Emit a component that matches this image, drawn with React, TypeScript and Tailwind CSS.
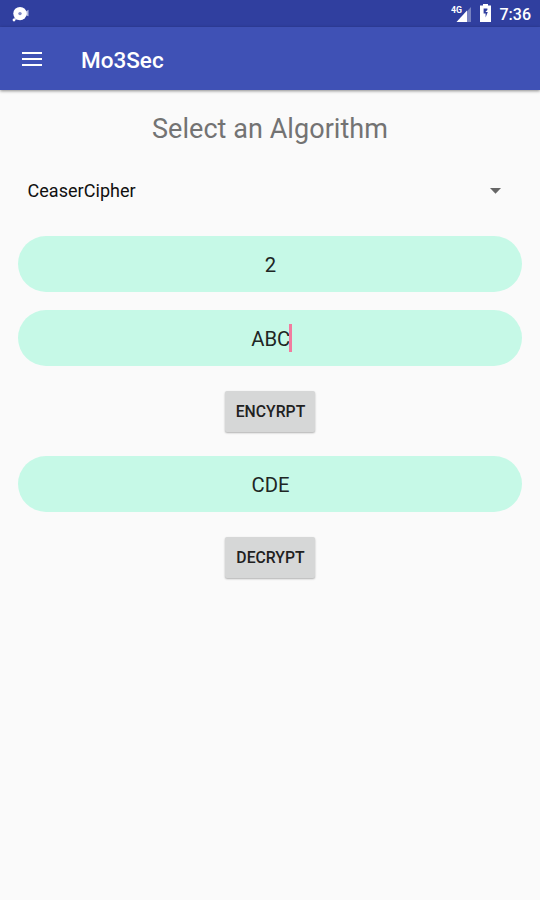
import type { ReactNode } from 'react';

function StatusBar() {
  return (
    <div className="flex h-[27px] items-center bg-[#303f9f] text-white">
      {/* Notification */}
      <svg className="ml-3 h-[18px] w-[18px]" viewBox="0 0 18 18" fill="none">
        <path d="M13 7l3.5-2.3v6.6L13 10z" fill="#b4bae0" />
        <path d="M1.8 15.5 3 10l3.5 4z" fill="#b4bae0" />
        <circle cx="2" cy="15" r="1.4" fill="#fff" />
        <circle cx="8" cy="8.6" r="6.7" fill="#fff" />
        <circle cx="8" cy="8.6" r="1.7" fill="#7f89c6" />
      </svg>

      <svg className="mr-px ml-auto h-[20px] w-[22px]" viewBox="0 0 22 20">
        <path d="M20 3v15H6z" fill="#fff" fillOpacity=".35" />
        <path d="M16 6.5V18H5.5z" fill="#fff" />
        <text x="0" y="9" fill="#fff" fontSize="8.5" fontWeight="700" fontFamily="Roboto, sans-serif" textLength="11" lengthAdjust="spacingAndGlyphs">4G</text>
      </svg>
      <svg className="mr-px mb-0.5 ml-[6px] h-[18px] w-[11px]" viewBox="0 0 11 18">
        <path d="M3 0h5v1.5h3V18H0V1.5h3z" fill="#fff" />
        <path d="M7.4 4.6H3.6v4.8h2v4.2L7.8 8H5.4l2-2z" fill="#303f9f" />
      </svg>
      <span className="mr-[9px] ml-2 pt-0.5 text-[16px] leading-none font-medium">7:36</span>
    </div>
  );
}

function AppBar({ title }: { title: string }) {
  return (
    <header className="relative flex h-[63px] items-center bg-[#3f51b5] pt-1 pl-[22px] text-white shadow-[0_1px_3px_rgba(0,0,0,0.45)]">
      <button type="button" aria-label="Menu" className="mb-1">
        <svg className="h-[14px] w-[20px]" viewBox="0 0 20 14" fill="#fff">
          <path d="M0 0h20v2H0zM0 6h20v2H0zM0 12h20v2H0z" />
        </svg>
      </button>
      <h1 className="ml-[39px] text-[22.5px] leading-none font-medium">{title}</h1>
    </header>
  );
}

function Field({ children }: { children: ReactNode }) {
  return (
    <div className="flex h-14 items-center justify-center rounded-full bg-[#c6f9e7] pt-0.5 pl-px text-[20.25px] leading-none text-[#202624]">
      {children}
    </div>
  );
}

function ActionButton({ label }: { label: string }) {
  return (
    <button
      type="button"
      className="mx-auto flex h-[41px] w-[90px] items-center justify-center rounded-[2px] bg-[#d6d7d7] pl-px text-[15.75px] leading-none font-medium text-[#212121] shadow-[0_1px_2px_rgba(0,0,0,0.3)]"
    >
      {label}
    </button>
  );
}

export default function App() {
  return (
    <div className="h-[900px] w-[540px] overflow-hidden bg-[#fafafa] font-['Roboto',sans-serif]">
      <StatusBar />
      <AppBar title="Mo3Sec" />

      <main className="px-[18px]">
        <h2 className="pt-6 text-center text-[27px] leading-[30px] tracking-[0.05px] text-[#737373]">Select an Algorithm</h2>

        <div className="mt-[29px] flex h-9 items-center justify-between pr-[21px] pl-[9.5px]">
          <span className="text-[18px] leading-none tracking-[0.04px] text-[#101010]">CeaserCipher</span>
          <svg className="h-[6px] w-[11px]" viewBox="0 0 11 6">
            <path d="M0 0h11L5.5 5.8z" fill="#666" />
          </svg>
        </div>

        <div className="mt-[27px]">
          <Field>2</Field>
        </div>
        <div className="mt-[18px]">
          <Field>
            ABC
            <span className="-mr-0.5 -ml-px mb-0.5 h-7 w-[2.5px] bg-[#f27c9f]" />
          </Field>
        </div>
        <div className="mt-[25px]">
          <ActionButton label="ENCYRPT" />
        </div>
        <div className="mt-6">
          <Field>CDE</Field>
        </div>
        <div className="mt-[25px]">
          <ActionButton label="DECRYPT" />
        </div>
      </main>
    </div>
  );
}
